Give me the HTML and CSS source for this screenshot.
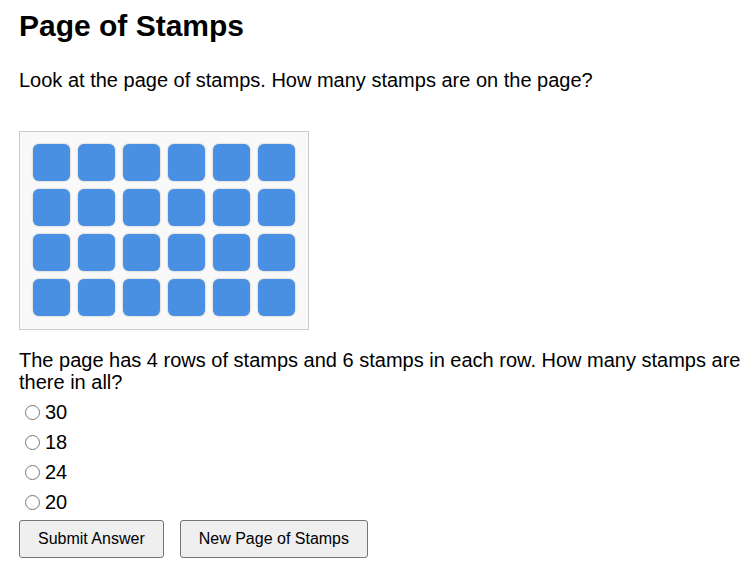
FILE: index.html
```html
<!DOCTYPE html>
<html lang="en">
<head>
<meta charset="utf-8">
<title>Page of Stamps</title>
<link rel="stylesheet" href="styles.css">
</head>
<body>
<main class="page">
  <h1 class="title">Page of Stamps</h1>
  <p class="intro">Look at the page of stamps. How many stamps are on the page?</p>
  <div class="sheet">
    <div class="stamp"></div><div class="stamp"></div><div class="stamp"></div><div class="stamp"></div><div class="stamp"></div><div class="stamp"></div>
    <div class="stamp"></div><div class="stamp"></div><div class="stamp"></div><div class="stamp"></div><div class="stamp"></div><div class="stamp"></div>
    <div class="stamp"></div><div class="stamp"></div><div class="stamp"></div><div class="stamp"></div><div class="stamp"></div><div class="stamp"></div>
    <div class="stamp"></div><div class="stamp"></div><div class="stamp"></div><div class="stamp"></div><div class="stamp"></div><div class="stamp"></div>
  </div>
  <p class="question">The page has 4 rows of stamps and 6 stamps in each row. How many stamps are there in all?</p>
  <div class="options">
    <label class="option"><input type="radio" name="answer" value="30" class="radio">30</label>
    <label class="option"><input type="radio" name="answer" value="18" class="radio">18</label>
    <label class="option"><input type="radio" name="answer" value="24" class="radio">24</label>
    <label class="option"><input type="radio" name="answer" value="20" class="radio">20</label>
  </div>
  <div class="actions">
    <button class="btn" type="button">Submit Answer</button>
    <button class="btn" type="button">New Page of Stamps</button>
  </div>
</main>
</body>
</html>
```

FILE: styles.css
```css
html, body {
  margin: 0;
  padding: 0;
  background: #ffffff;
}

body {
  font-family: "Liberation Sans", Arial, sans-serif;
  color: #000000;
}

.page {
  padding: 9px 8px 0 19px;
}

.title {
  margin: 0;
  font-size: 30px;
  font-weight: bold;
  line-height: normal;
}

.intro {
  margin: 26px 0 0;
  font-size: 20px;
  line-height: 22px;
}

.sheet {
  margin-top: 40px;
  display: grid;
  grid-template-columns: repeat(6, 37px);
  grid-auto-rows: 37px;
  gap: 8px;
  width: max-content;
  padding: 12px 13px 13px 13px;
  background: #f9f9f9;
  border: 1px solid #cccccc;
}

.stamp {
  background: #4a90e2;
  border-radius: 6px;
  box-shadow: 0 0 2px rgba(0, 0, 0, 0.3);
}

.question {
  margin: 19px 0 0;
  font-size: 20px;
  line-height: 22px;
}

.options {
  margin-top: 4px;
  display: flex;
  flex-direction: column;
}

.option {
  display: flex;
  align-items: center;
  height: 30px;
  font-size: 20px;
}

.radio {
  margin: 0 5px 0 6px;
  width: 15px;
  height: 15px;
}

.actions {
  margin-top: 3px;
  display: flex;
  gap: 16px;
}

.btn {
  height: 38px;
  padding: 0 18px;
  font-family: "Liberation Sans", Arial, sans-serif;
  font-size: 16px;
  color: #000000;
  background: #efefef;
  border: 1px solid #767676;
  border-radius: 3px;
}
```
